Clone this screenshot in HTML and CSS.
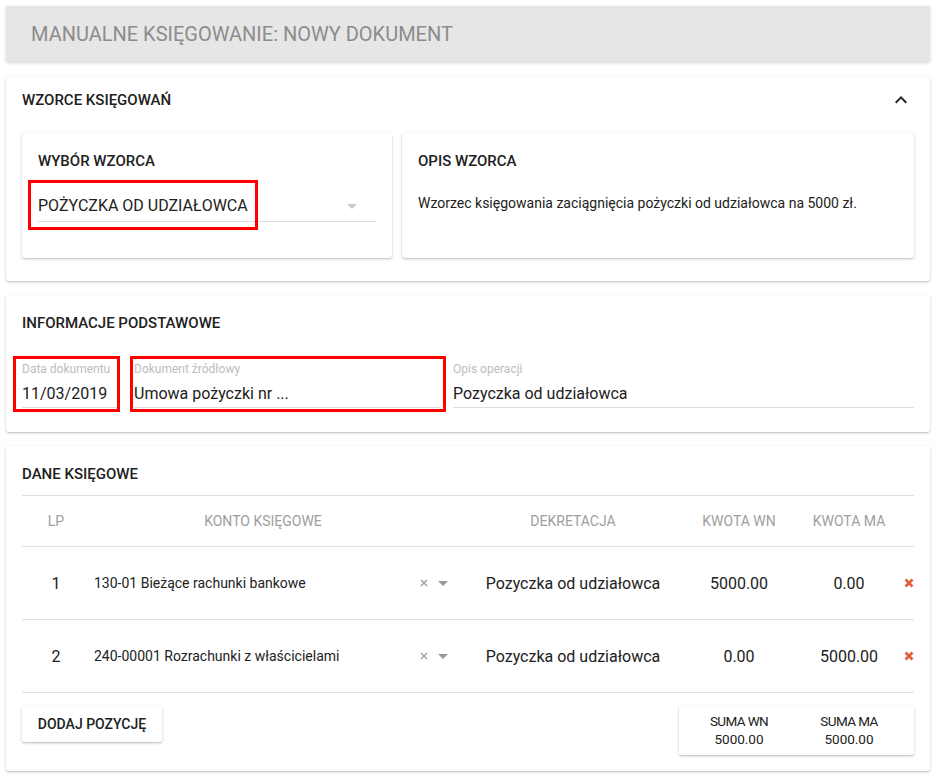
FILE: index.html
```html
<!DOCTYPE html>
<html lang="pl">
<head>
<meta charset="utf-8">
<title>Manualne księgowanie</title>
<link rel="stylesheet" href="styles.css">
</head>
<body>
<div class="page">
  <div class="topbar">MANUALNE KSIĘGOWANIE: NOWY DOKUMENT</div>

  <section class="card card-patterns">
    <div class="panel-head">
      <h2 class="card-title">WZORCE KSIĘGOWAŃ</h2>
      <svg class="chevron" width="24" height="24" viewBox="0 0 24 24"><path d="M7.41 15.41L12 10.83l4.59 4.58L18 14l-6-6-6 6z" fill="#222"/></svg>
    </div>
    <div class="pattern-grid">
      <div class="subcard">
        <h3 class="card-title">WYBÓR WZORCA</h3>
        <div class="select">
          <span class="select-value">POŻYCZKA OD UDZIAŁOWCA</span>
          <span class="tri tri-light"></span>
          <span class="highlight hl-select"></span>
        </div>
      </div>
      <div class="subcard">
        <h3 class="card-title">OPIS WZORCA</h3>
        <p class="desc">Wzorzec księgowania zaciągnięcia pożyczki od udziałowca na 5000 zł.</p>
      </div>
    </div>
  </section>

  <section class="card card-info">
    <h2 class="card-title">INFORMACJE PODSTAWOWE</h2>
    <div class="fields">
      <div class="field field-date">
        <div class="field-label">Data dokumentu</div>
        <div class="field-value">11/03/2019</div>
        <span class="highlight hl-date"></span>
      </div>
      <div class="field field-src">
        <div class="field-label">Dokument źródłowy</div>
        <div class="field-value">Umowa pożyczki nr ...</div>
        <span class="highlight hl-src"></span>
      </div>
      <div class="field field-op">
        <div class="field-label">Opis operacji</div>
        <div class="field-value">Pozyczka od udziałowca</div>
      </div>
    </div>
  </section>

  <section class="card card-ledger">
    <h2 class="card-title ledger-title">DANE KSIĘGOWE</h2>
    <div class="ledger">
      <div class="lrow lhead">
        <div class="h-lp">LP</div>
        <div class="h-konto">KONTO KSIĘGOWE</div>
        <div class="h-dek">DEKRETACJA</div>
        <div class="h-num">KWOTA WN</div>
        <div class="h-num">KWOTA MA</div>
        <div class="h-del"></div>
      </div>
      <div class="lrow lbody">
        <div class="c-lp big">1</div>
        <div class="c-konto">
          <span class="konto-text">130-01 Bieżące rachunki bankowe</span>
          <svg class="clear" width="8" height="8" viewBox="0 0 8 8"><path d="M1 1L7 7M7 1L1 7" stroke="#9a9a9a" stroke-width="1.3"/></svg>
          <span class="tri tri-dark"></span>
        </div>
        <div class="c-dek big">Pozyczka od udziałowca</div>
        <div class="c-num big">5000.00</div>
        <div class="c-num big">0.00</div>
        <div class="c-del"><svg width="10" height="10" viewBox="0 0 10 10"><path d="M1.5 1.5L8.5 8.5M8.5 1.5L1.5 8.5" stroke="#e45d3a" stroke-width="2.6"/></svg></div>
      </div>
      <div class="lrow lbody">
        <div class="c-lp big">2</div>
        <div class="c-konto">
          <span class="konto-text">240-00001 Rozrachunki z właścicielami</span>
          <svg class="clear" width="8" height="8" viewBox="0 0 8 8"><path d="M1 1L7 7M7 1L1 7" stroke="#9a9a9a" stroke-width="1.3"/></svg>
          <span class="tri tri-dark"></span>
        </div>
        <div class="c-dek big">Pozyczka od udziałowca</div>
        <div class="c-num big">0.00</div>
        <div class="c-num big">5000.00</div>
        <div class="c-del"><svg width="10" height="10" viewBox="0 0 10 10"><path d="M1.5 1.5L8.5 8.5M8.5 1.5L1.5 8.5" stroke="#e45d3a" stroke-width="2.6"/></svg></div>
      </div>
    </div>
    <div class="ledger-foot">
      <button class="btn">DODAJ POZYCJĘ</button>
      <div class="summary">
        <div class="sum-col"><div class="sum-label">SUMA WN</div><div>5000.00</div></div>
        <div class="sum-col"><div class="sum-label">SUMA MA</div><div>5000.00</div></div>
      </div>
    </div>
  </section>
</div>
</body>
</html>
```

FILE: styles.css
```css
* { box-sizing: border-box; }
html, body { margin: 0; padding: 0; background: #ffffff; }
body {
  font-family: Roboto, "Noto Sans", "Liberation Sans", sans-serif;
  color: #212121;
}
.page {
  padding: 6px 5px 6px 6px;
  display: flex;
  flex-direction: column;
  gap: 14px;
}
.topbar {
  height: 56px;
  background: #e6e6e6;
  color: #8c8c8c;
  font-size: 20px;
  line-height: 56px;
  padding-left: 25px;
  box-shadow: 0 1px 3px rgba(0,0,0,0.18);
}
.card {
  background: #fff;
  border-radius: 3px;
  box-shadow: 0 1px 3px rgba(0,0,0,0.2), 0 1px 1px rgba(0,0,0,0.08);
  padding: 16px;
}
.card-title {
  margin: 0;
  font-size: 15px;
  font-weight: 500;
  line-height: 24px;
  color: #212121;
}
/* card 1 */
.card-patterns { padding: 0 16px 23px; }
.panel-head {
  height: 48px;
  display: flex;
  align-items: center;
  justify-content: space-between;
}
.chevron { display: block; margin-right: 1px; }
.pattern-grid {
  margin-top: 9px;
  display: grid;
  grid-template-columns: 370px 1fr;
  gap: 10px;
}
.subcard {
  background: #fff;
  border-radius: 3px;
  box-shadow: 0 1px 3px rgba(0,0,0,0.2), 0 1px 1px rgba(0,0,0,0.08);
  padding: 16px 16px 36px;
}
.select {
  position: relative;
  margin-top: 21px;
  display: flex;
  align-items: center;
  justify-content: space-between;
  border-bottom: 1px solid #dedede;
  padding-bottom: 3px;
}
.select-value {
  font-size: 16px;
  line-height: 24px;
  color: #212121;
}
.tri {
  width: 0; height: 0;
  border-left: 5px solid transparent;
  border-right: 5px solid transparent;
}
.tri-light { border-top: 5px solid #c8c8c8; margin-right: 19px; }
.tri-dark { border-top: 5px solid #9a9a9a; }
.desc {
  margin: 20px 0 0;
  font-size: 14px;
  line-height: 20px;
  color: #212121;
}
.highlight {
  position: absolute;
  border: 3px solid #ff0000;
  pointer-events: none;
}
.hl-select { left: -10px; top: -14px; width: 230px; height: 50px; }

/* card 2 */
.card-info { padding: 16px 16px 24px; }
.fields {
  margin-top: 27px;
  display: flex;
  gap: 12px;
}
.field {
  position: relative;
  border-bottom: 1px solid #dedede;
  padding-bottom: 3px;
}
.field-date { width: 95px; margin-right: 5px; }
.field-src { width: 307px; }
.field-op { flex: 1; }
.field-label {
  font-size: 12px;
  line-height: 14px;
  color: #bdbdbd;
  white-space: nowrap;
}
.field-value {
  margin-top: 8px;
  font-size: 16px;
  line-height: 20px;
  color: #212121;
  white-space: nowrap;
}
.hl-date { left: -9px; top: -6px; right: -3px; bottom: -5px; }
.hl-src { left: -4px; top: -6px; right: -5px; bottom: -5px; }

/* card 3 */
.ledger-title { margin-bottom: 9px; }
.ledger { border-top: 1px solid #e0e0e0; }
.lrow {
  display: grid;
  grid-template-columns: 68px 372px 222px 110px 110px 10px;
  align-items: center;
  border-bottom: 1px solid #e0e0e0;
}
.lhead {
  height: 51px;
  font-size: 14px;
  color: #9e9e9e;
  text-align: center;
}
.h-konto { padding-right: 26px; }
.lbody { height: 73px; }
.c-lp, .c-dek, .c-num { text-align: center; }
.big { font-size: 16px; color: #212121; }
.c-konto {
  display: flex;
  align-items: center;
  padding: 0 14px 0 4px;
  font-size: 14px;
  color: #212121;
}
.konto-text { flex: 1; white-space: nowrap; }
.clear { display: block; margin-right: 10px; }
.c-del { display: flex; justify-content: center; }
.c-del svg { display: block; }
.ledger-foot {
  margin-top: 13px;
  display: flex;
  justify-content: space-between;
  align-items: flex-start;
}
.btn {
  height: 36px;
  width: 140px;
  border: none;
  background: #fff;
  border-radius: 2px;
  box-shadow: 0 1px 3px rgba(0,0,0,0.22), 0 1px 1px rgba(0,0,0,0.08);
  font-family: Roboto, "Noto Sans", "Liberation Sans", sans-serif;
  font-size: 14px;
  font-weight: 500;
  color: #212121;
  padding: 0;
}
.summary {
  width: 235px;
  height: 49px;
  display: grid;
  grid-template-columns: 110px 110px;
  padding: 6px 10px 0 5px;
  border-radius: 2px;
  box-shadow: 0 1px 3px rgba(0,0,0,0.22), 0 1px 1px rgba(0,0,0,0.08);
  font-size: 13.5px;
  line-height: 18px;
  color: #212121;
}
.sum-label { letter-spacing: -0.6px; }
.sum-col { text-align: center; }
```
